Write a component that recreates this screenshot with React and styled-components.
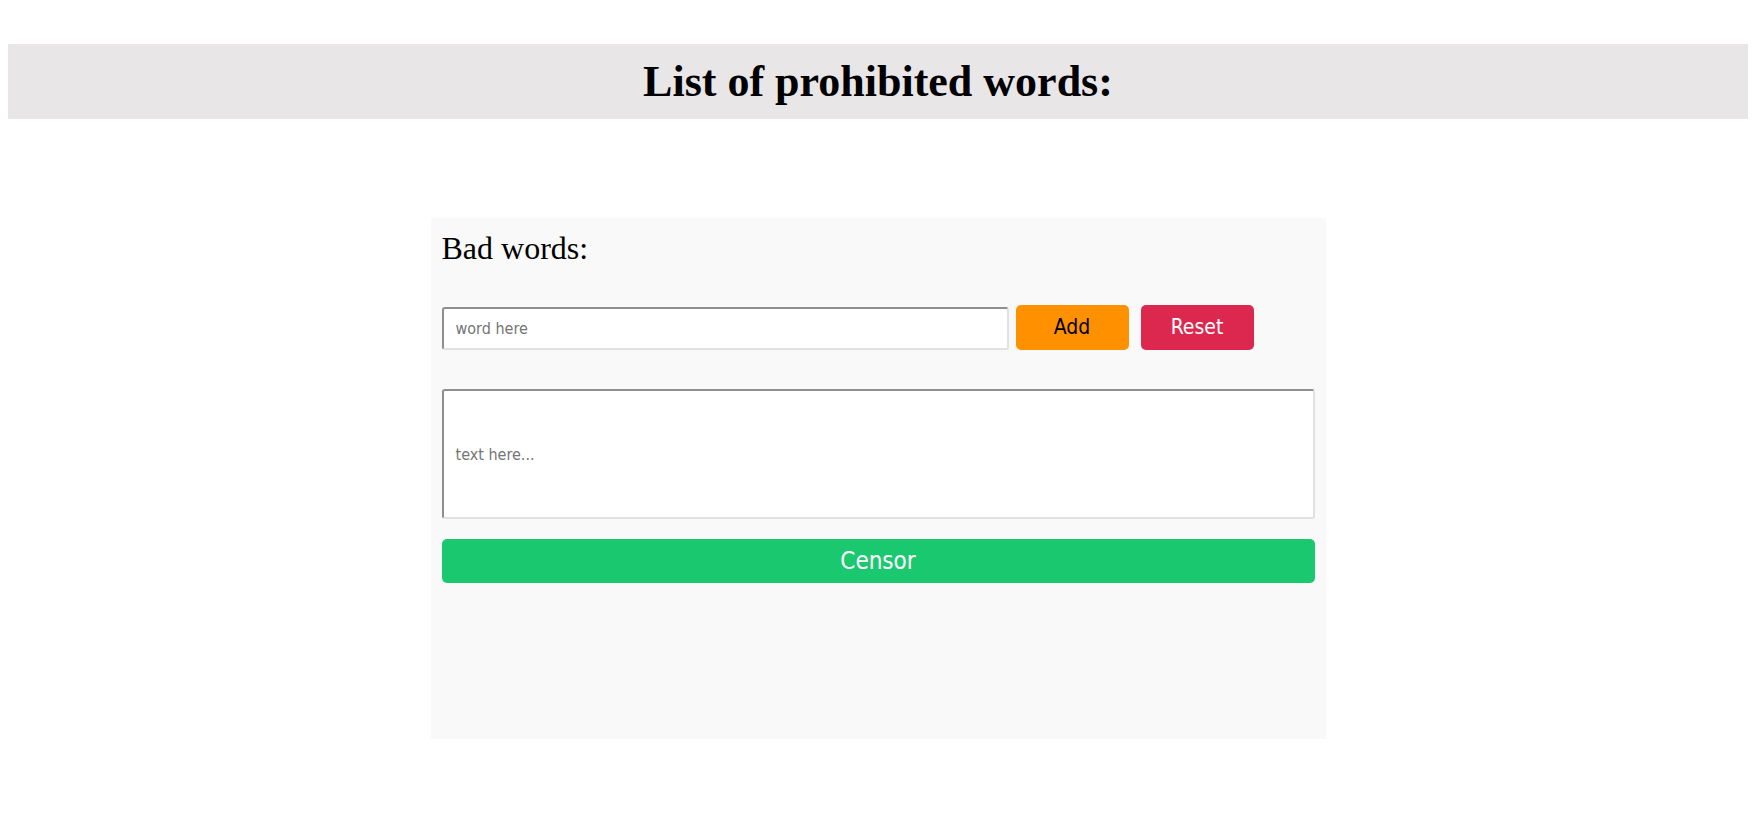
import React, { useState } from "react";
import styled, { createGlobalStyle } from "styled-components";

const GlobalStyle = createGlobalStyle`
  body {
    margin: 8px;
    background: #fff;
    font-family: "Liberation Serif", "Times New Roman", serif;
  }
`;

const uiFont = `"DejaVu Sans Condensed", "DejaVu Sans", Verdana, sans-serif`;

const Header = styled.header`
  margin-top: 36px;
  height: 75px;
  background-color: #e8e6e7;
  display: flex;
  align-items: center;
  justify-content: center;
`;

const Title = styled.h1`
  margin: 0;
  font-size: 44px;
  font-weight: bold;
  line-height: 51px;
  color: #000;
`;

const Panel = styled.section`
  box-sizing: border-box;
  width: 895px;
  height: 521px;
  margin: 99px auto 0;
  padding: 13px 11px 0;
  background-color: #f9f9f9;
  display: flex;
  flex-direction: column;
`;

const Label = styled.div`
  font-size: 32px;
  line-height: 35px;
  color: #000;
`;

const WordRow = styled.div`
  margin-top: 38px;
  display: flex;
  align-items: center;
`;

const fieldBorder = `
  border: 2px solid;
  border-color: #8f8f8f #e1e1e1 #e1e1e1 #8f8f8f;
  border-radius: 3px;
  background: #fff;
  font-family: ${uiFont};
  font-size: 16px;
  color: #000;
  outline: none;
  &::placeholder {
    color: #757575;
  }
`;

const WordInput = styled.input`
  ${fieldBorder}
  box-sizing: border-box;
  width: 567px;
  height: 43px;
  padding: 0 12px;
  margin: 3px 7px 0 0;
`;

const Button = styled.button`
  box-sizing: border-box;
  border: none;
  border-radius: 5px;
  cursor: pointer;
  font-family: ${uiFont};
  background-color: ${(p) => p.$bg};
  color: ${(p) => p.$fg};
  font-size: ${(p) => p.$size || "21px"};
  padding: 0;
`;

const SmallButton = styled(Button)`
  width: 113px;
  height: 45px;
  margin-right: 12px;
`;

const TextArea = styled.textarea`
  ${fieldBorder}
  box-sizing: border-box;
  display: block;
  margin-top: 39px;
  width: 873px;
  height: 130px;
  padding: 54px 12px 0;
  resize: none;
  line-height: 19px;
`;

const CensorButton = styled(Button)`
  margin-top: 20px;
  width: 873px;
  height: 44px;
`;

export default function App() {
  const [word, setWord] = useState("");
  const [words, setWords] = useState([]);
  const [text, setText] = useState("");

  const handleAdd = () => {
    if (!word.trim()) return;
    setWords([...words, word.trim()]);
    setWord("");
  };

  const handleReset = () => {
    setWords([]);
    setText("");
  };

  const handleCensor = () => {
    let result = text;
    words.forEach((w) => {
      result = result.split(w).join("*".repeat(w.length));
    });
    setText(result);
  };

  return (
    <>
      <GlobalStyle />
      <Header>
        <Title>List of prohibited words:</Title>
      </Header>
      <Panel>
        <Label>Bad words:{words.length ? " " + words.join(", ") : ""}</Label>
        <WordRow>
          <WordInput
            value={word}
            onChange={(e) => setWord(e.target.value)}
            placeholder="word here"
          />
          <SmallButton $bg="#ff9100" $fg="#000" onClick={handleAdd}>
            Add
          </SmallButton>
          <SmallButton $bg="#dc284f" $fg="#fff" onClick={handleReset}>
            Reset
          </SmallButton>
        </WordRow>
        <TextArea
          value={text}
          onChange={(e) => setText(e.target.value)}
          placeholder="text here..."
        />
        <CensorButton $bg="#1ac96f" $fg="#fff" $size="24px" onClick={handleCensor}>
          Censor
        </CensorButton>
      </Panel>
    </>
  );
}
